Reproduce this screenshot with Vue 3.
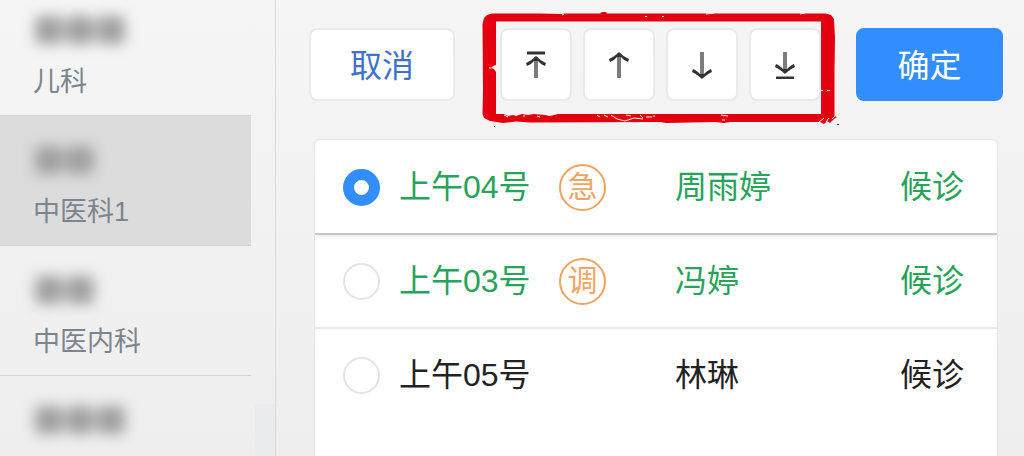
<script setup>
import { ref } from 'vue'

const departments = [
  { id: 1, name: '儿科', blocks: 3 },
  { id: 2, name: '中医科1', blocks: 2 },
  { id: 3, name: '中医内科', blocks: 2 },
  { id: 4, name: '', blocks: 3 },
]
const activeDepartment = ref(2)

const queue = [
  { id: 4, number: '上午04号', tag: '急', name: '周雨婷', status: '候诊', checked: true },
  { id: 3, number: '上午03号', tag: '调', name: '冯婷', status: '候诊', checked: true },
  { id: 5, number: '上午05号', tag: '', name: '林琳', status: '候诊', checked: false },
]
const selected = ref(4)

const moves = [
  {
    label: '置顶',
    stem: 'M14 27V9',
    head: 'M4 12C8 10 11 8 14 5C17 8 20 10 24 12L23 15C20 14 18 12 16 10H12C10 12 8 14 5 15Z',
    bar: 'M5 2H23',
  },
  {
    label: '上移',
    stem: 'M14 27V4',
    head: 'M4 8C8 6 11 4 14 1C17 4 20 6 24 8L23 11C20 10 18 8 16 6H12C10 8 8 10 5 11Z',
    bar: '',
  },
  {
    label: '下移',
    stem: 'M14 1V24',
    head: 'M4 21C8 23 11 25 14 28C17 25 20 23 24 21L23 18C20 19 18 21 16 23H12C10 21 8 19 5 18Z',
    bar: '',
  },
  {
    label: '置底',
    stem: 'M14 1V19',
    head: 'M4 16C8 18 11 20 14 23C17 20 20 18 24 16L23 13C20 14 18 16 16 18H12C10 16 8 14 5 13Z',
    bar: 'M5 27H23',
  },
]
</script>

<template>
  <div class="app">
    <nav class="sidebar">
      <button
        v-for="d in departments"
        :key="d.id"
        type="button"
        class="doctor"
        :class="{ active: d.id === activeDepartment }"
        @click="activeDepartment = d.id"
      >
        <span class="masked" aria-hidden="true"><i v-for="n in d.blocks" :key="n"></i></span>
        <span class="dept">{{ d.name }}</span>
      </button>
      <span class="thumb"></span>
    </nav>

    <main class="main">
      <div class="toolbar">
        <button type="button" class="btn cancel">取消</button>
        <div class="moves">
          <button v-for="m in moves" :key="m.label" type="button" class="btn move" :aria-label="m.label">
            <svg viewBox="0 0 28 28" width="28" height="28" fill="none">
              <path :d="m.stem" stroke="#7c7c7c" stroke-width="4" />
              <path :d="m.head" fill="#333" />
              <path v-if="m.bar" :d="m.bar" stroke="#333" stroke-width="3" />
            </svg>
          </button>
          <svg class="frame" viewBox="0 0 364 120" width="364" height="120" aria-hidden="true">
            <path
              fill="#e3000f"
              fill-rule="evenodd"
              d="M2.5 16L4 10L7 7L12 5.500L60 5.500L82 6L84 5.500L120 5.500L122 4L126 4L127 5.500L240 5.500L346 5.500L351 7L354 11L355 30L354.500 62L354.500 108L357 109L354 111L350 115L347 113L344 116L340 114L250 114L244 115L235 114L186 115L180 114L50 114.500L36 113.500L23 115L10 113L4 110L2.500 106L3 82ZM16 13.500L16 57L13 58L11 60L14 61L16 64V106L24 106L28 108L33 107L36 108L42 106L48 107L54 106L65 107L70 108L78 106L341 106V13.500Z"
            />
            <g fill="none" stroke="#f7f3f3" stroke-width="1">
              <path d="M82 7L84 6M165 8.500H167M182 8.500H184M226 6L234 5M320 6L325 5" />
              <path d="M117 107L120 109M124 107L128 109M131 107L137 111L145 113L154 110L163 111M146 107L151 108M160 107L163 110M166 109L172 109M174 107V109" />
              <path d="M24 107L28 109M44 107V109M57 108L60 109M241 107L248 108M242 112H245M11 60H9" />
              <path d="M341 82.500H343M347 82.500H350M338 115L344 110M346 114L349 110M352 111L355 108" />
            </g>
            <path d="M357 116.500H359M14 118.500H15" stroke="#333" stroke-width="1" />
          </svg>
        </div>
        <button type="button" class="btn confirm">确定</button>
      </div>

      <div class="card">
        <label
          v-for="q in queue"
          :key="q.id"
          class="row"
          :class="{ green: q.checked, lifted: q.id === selected }"
        >
          <input v-model="selected" type="radio" name="patient" :value="q.id" />
          <span>{{ q.number }}</span>
          <span><b v-if="q.tag" class="tag">{{ q.tag }}</b></span>
          <span>{{ q.name }}</span>
          <span>{{ q.status }}</span>
        </label>
      </div>
    </main>
  </div>
</template>

<style>
body {
  margin: 0;
}
</style>

<style scoped>
.app {
  display: flex;
  height: 100vh;
  overflow: hidden;
  background: linear-gradient(#f5f5f5, #efeeef);
  color: #222;
  font-family: "Liberation Sans", "Noto Sans CJK SC", sans-serif;
  font-size: 32px;
}
button {
  font: inherit;
  cursor: pointer;
}
.sidebar {
  position: relative;
  box-sizing: border-box;
  flex: none;
  width: 276px;
  padding-right: 24px;
  border-right: 1px solid #d8d9d9;
}
.doctor {
  display: flex;
  flex-direction: column;
  gap: 12px;
  box-sizing: border-box;
  width: 100%;
  padding: 24px 0 13px 33px;
  border: 0;
  border-bottom: 1px solid #d4d4d4;
  background: none;
  color: #7c858e;
  font-size: 27px;
  line-height: 40px;
  text-align: left;
}
.doctor:first-child {
  padding-top: 10px;
}
.doctor.active {
  background: #dcdcdc;
}
.masked {
  display: flex;
  align-items: center;
  gap: 3px;
  height: 40px;
  padding-left: 2px;
  filter: blur(7px);
}
.masked i {
  width: 28px;
  height: 28px;
  border-radius: 6px;
  background: #a0a0a0;
}
.dept {
  min-height: 40px;
}
.thumb {
  position: absolute;
  right: 0;
  bottom: 0;
  width: 20px;
  height: 52px;
  background: #e9ebec;
}
.main {
  display: flex;
  flex: 1;
  flex-direction: column;
  min-width: 0;
}
.toolbar {
  display: flex;
  gap: 34px;
  padding: 28px 21px 0 33px;
}
.btn {
  display: flex;
  flex: none;
  align-items: center;
  justify-content: center;
  box-sizing: border-box;
  height: 73px;
  padding: 0;
  border: 2px solid #e9eaea;
  border-radius: 8px;
  background: #fff;
}
.cancel {
  width: 146px;
  padding-bottom: 4px;
  color: #3f72cf;
}
.confirm {
  width: 147px;
  margin-left: auto;
  padding-bottom: 4px;
  border-color: #338efd;
  background: #338efd;
  color: #fff;
}
.moves {
  position: relative;
  display: flex;
  gap: 11px;
  margin-left: 11px;
}
.move {
  width: 72px;
}
.frame {
  position: absolute;
  top: -20px;
  left: -20px;
  pointer-events: none;
}
.card {
  flex: 1;
  margin: 38px 26px 0 38px;
  padding-top: 1px;
  border: 1px solid #e3e3e3;
  border-bottom: 0;
  border-radius: 6px 6px 0 0;
  background: #fff;
}
.row {
  display: grid;
  grid-template-columns: 36px 140px 96px 1fr auto;
  column-gap: 20px;
  align-items: center;
  box-sizing: border-box;
  height: 94px;
  padding: 0 33px 0 28px;
  border-bottom: 2px solid #e8eaea;
  line-height: 48px;
  white-space: nowrap;
}
.row:last-child {
  border-bottom-color: transparent;
}
.row.green {
  color: #27a35a;
}
.row.lifted {
  border-bottom-color: #c6c6c6;
  box-shadow: 0 2px 3px #eeeeee;
}
.row input {
  appearance: none;
  box-sizing: border-box;
  width: 37px;
  height: 37px;
  margin: 0;
  border: 2px solid #e4e4e4;
  border-radius: 50%;
  background: #fff;
}
.row input:checked {
  border: 11px solid #338efd;
}
.tag {
  display: flex;
  align-items: center;
  justify-content: center;
  box-sizing: border-box;
  width: 47px;
  height: 47px;
  border: 2px solid #efa45c;
  border-radius: 50%;
  color: #f0a765;
  font-size: 30px;
  font-weight: 400;
  line-height: 40px;
}
</style>
